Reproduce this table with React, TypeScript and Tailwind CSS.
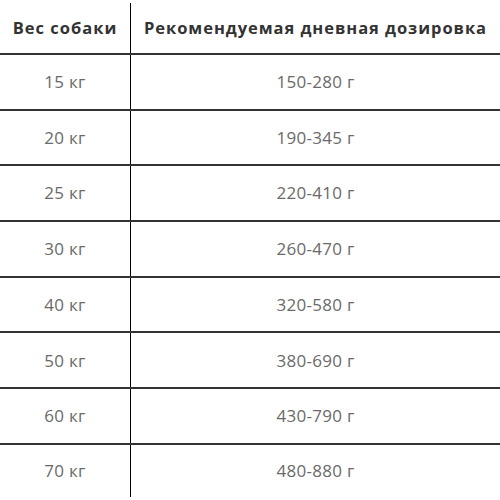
const rows = [
  ["15 кг", "150-280 г"],
  ["20 кг", "190-345 г"],
  ["25 кг", "220-410 г"],
  ["30 кг", "260-470 г"],
  ["40 кг", "320-580 г"],
  ["50 кг", "380-690 г"],
  ["60 кг", "430-790 г"],
  ["70 кг", "480-880 г"],
];

export default function App() {
  return (
    <div
      className="w-[500px] h-[500px] overflow-hidden bg-white pt-[3px]"
      style={{ fontFamily: '"Open Sans", "Noto Sans", sans-serif' }}
    >
      <div className="grid grid-cols-[131px_1fr] h-[52px] border-b-2 border-[#333]">
        <div className="flex items-center justify-center border-r border-black text-[16.5px] font-bold text-[#333] tracking-[1px]">
          Вес собаки
        </div>
        <div className="flex items-center justify-center text-[16.5px] font-bold text-[#333] tracking-[0.95px]">
          Рекомендуемая дневная дозировка
        </div>
      </div>
      {rows.map(([weight, dose], i) => (
        <div
          key={weight}
          className={
            i < rows.length - 1
              ? "grid grid-cols-[131px_1fr] h-[55.7px] border-b-2 border-[#333]"
              : "grid grid-cols-[131px_1fr] h-[55px] pb-[3px]"
          }
        >
          <div className="flex items-center justify-center border-r border-black text-[17px] font-normal text-[#6a6a6a] tracking-[0.3px]">
            {weight}
          </div>
          <div className="flex items-center justify-center text-[17px] font-normal text-[#6a6a6a] tracking-[0.3px]">
            {dose}
          </div>
        </div>
      ))}
    </div>
  );
}
